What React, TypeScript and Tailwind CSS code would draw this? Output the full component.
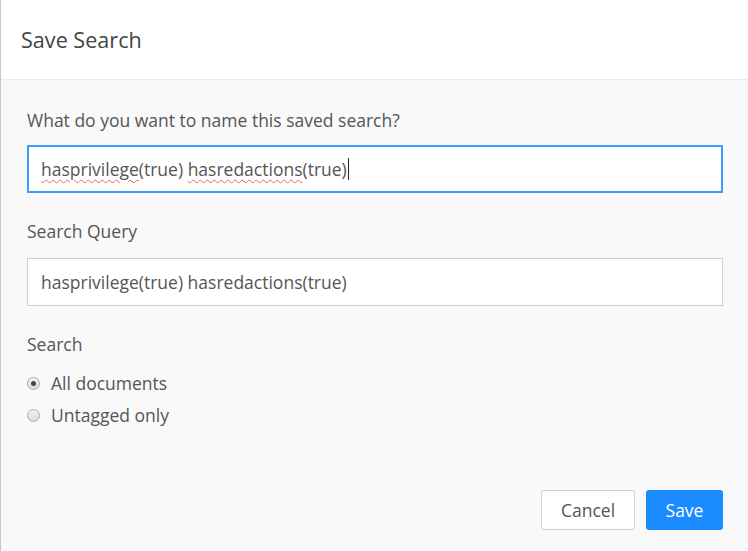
import React from "react";

function Radio({ checked }: { checked: boolean }) {
  return (
    <span className="relative flex h-[13px] w-[13px] items-center justify-center rounded-full border border-[#a9a9a9] bg-gradient-to-b from-[#f2f2f2] to-[#dcdcdc]">
      {checked && <span className="h-[5px] w-[5px] rounded-full bg-[#444]" />}
    </span>
  );
}

export default function App() {
  return (
    <div
      className="flex h-[551px] w-[748px] flex-col overflow-hidden border-l border-[#c8c8c8] bg-[#f9f9f9] text-[#555]"
      style={{ fontFamily: '"Open Sans", sans-serif' }}
    >
      <div className="flex h-[80px] shrink-0 items-center border-b border-[#ebebeb] bg-white pl-[20px]">
        <h1 className="text-[21.6px] leading-[28px] text-[#444]">Save Search</h1>
      </div>
      <div className="flex flex-1 flex-col pl-[26px] pr-[25px] pt-[29px]">
        <label className="text-[17.5px] leading-[22px]">What do you want to name this saved search?</label>
        <div className="mt-[14px] flex h-[48px] items-center border-2 border-[#3d9bfd] bg-white pl-[12px] text-[17.5px] text-[#555]">
          <span className="underline decoration-[#f06060] decoration-wavy decoration-1 underline-offset-[3px]">hasprivilege</span>
          <span>(true)&nbsp;</span>
          <span className="underline decoration-[#f06060] decoration-wavy decoration-1 underline-offset-[3px]">hasredactions</span>
          <span>(true)</span>
          <span className="ml-[1px] h-[22px] w-[1px] bg-[#222]" />
        </div>
        <label className="mt-[27px] text-[17.5px] leading-[22px]">Search Query</label>
        <div className="mt-[16px] flex h-[48px] items-center border border-[#cfcfcf] bg-white pl-[13px] text-[17.5px] text-[#555]">
          hasprivilege(true) hasredactions(true)
        </div>
        <label className="mt-[27px] text-[17.5px] leading-[22px]">Search</label>
        <div className="mt-[17px] flex h-[22px] items-center gap-[11px]">
          <Radio checked />
          <span className="text-[17.5px]">All documents</span>
        </div>
        <div className="mt-[10px] flex h-[22px] items-center gap-[11px]">
          <Radio checked={false} />
          <span className="text-[17.5px]">Untagged only</span>
        </div>
        <div className="mt-[64px] flex justify-end gap-[11px]">
          <button className="h-[40px] w-[94px] rounded-[3px] border border-[#d0d0d0] bg-white text-[17.5px] text-[#555]">
            Cancel
          </button>
          <button className="h-[40px] w-[77px] rounded-[3px] bg-[#1a8cff] text-[17.5px] text-white">
            Save
          </button>
        </div>
      </div>
    </div>
  );
}
